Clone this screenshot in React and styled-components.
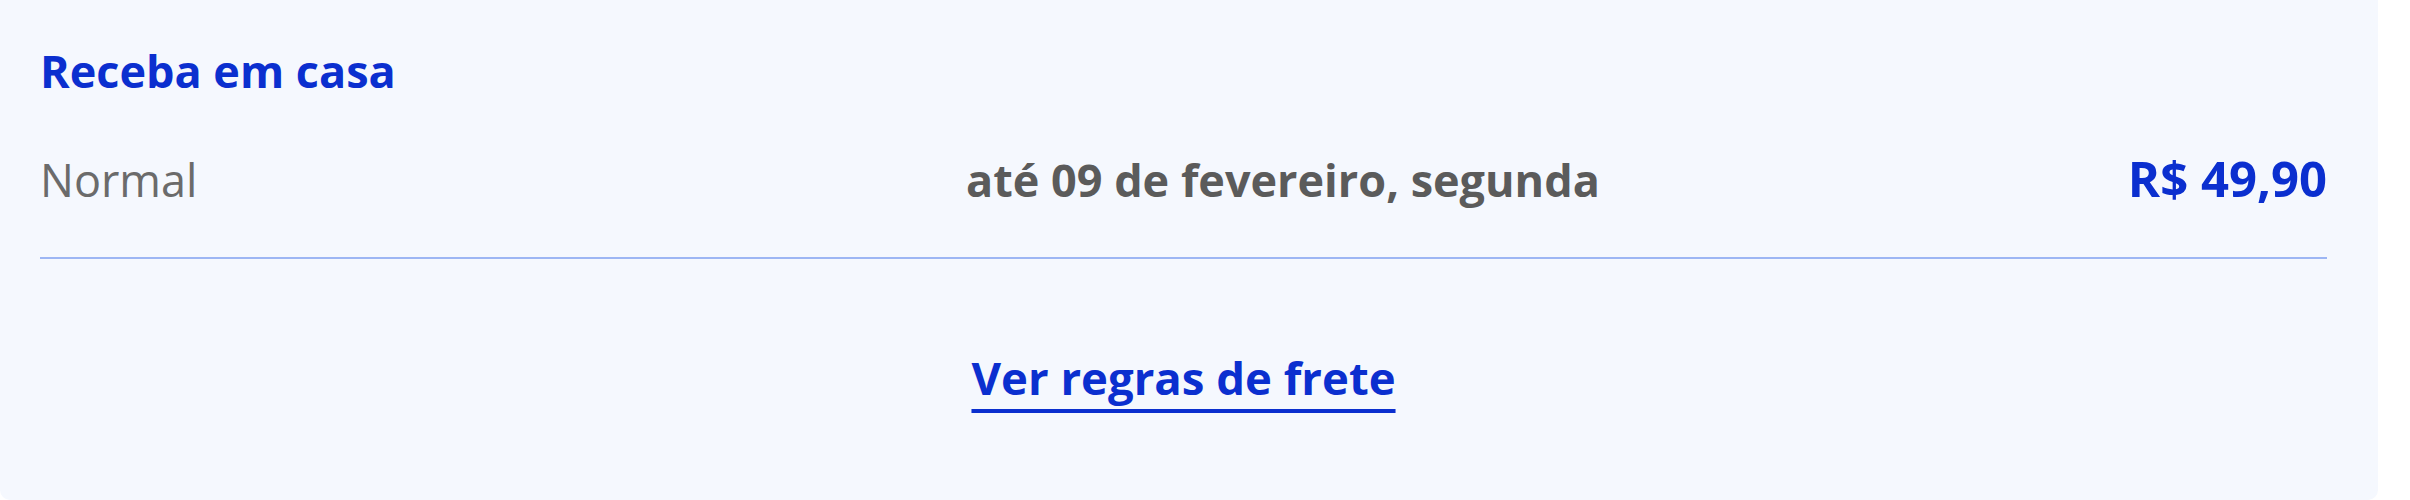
import React from "react";
import styled, { createGlobalStyle } from "styled-components";

const Global = createGlobalStyle`
  html, body { margin: 0; padding: 0; background: #ffffff; }
  body { font-family: "Open Sans", "Noto Sans", sans-serif; }
  * { box-sizing: border-box; }
`;

const Panel = styled.section`
  margin-right: 32px;
  height: 500px;
  padding: 49px 51px 0 40px;
  background: #f5f8fe;
  border-radius: 0 0 10px 10px;
  display: flex;
  flex-direction: column;
`;

const Title = styled.h2`
  margin: 0;
  font-size: 45px;
  line-height: 44px;
  font-weight: 700;
  color: #0b2fcf;
`;

const ShippingRow = styled.div`
  margin-top: 63px;
  padding-bottom: 55px;
  border-bottom: 2px solid #9db6f4;
  display: grid;
  grid-template-columns: 926px 1fr auto;
  align-items: baseline;
`;

const Cell = styled.span`
  font-size: ${(p) => p.$size || 45}px;
  line-height: 45px;
  font-weight: ${(p) => (p.$bold ? 700 : 400)};
  color: ${(p) => p.$color};
  white-space: nowrap;
`;

const Footer = styled.div`
  margin-top: 96px;
  display: flex;
  justify-content: center;
`;

const RulesLink = styled.a`
  font-size: 45.5px;
  line-height: 45px;
  font-weight: 700;
  color: #0b2fcf;
  text-decoration: underline;
  text-decoration-thickness: 4px;
  text-underline-offset: 14px;
  cursor: pointer;
`;

export default function App() {
  return (
    <>
      <Global />
      <Panel>
        <Title>Receba em casa</Title>
        <ShippingRow>
          <Cell $color="#6b6b6b">Normal</Cell>
          <Cell $bold $color="#5b5b5b">até 09 de fevereiro, segunda</Cell>
          <Cell $bold $size={49} $color="#0b2fcf">R$ 49,90</Cell>
        </ShippingRow>
        <Footer>
          <RulesLink href="#">Ver regras de frete</RulesLink>
        </Footer>
      </Panel>
    </>
  );
}
